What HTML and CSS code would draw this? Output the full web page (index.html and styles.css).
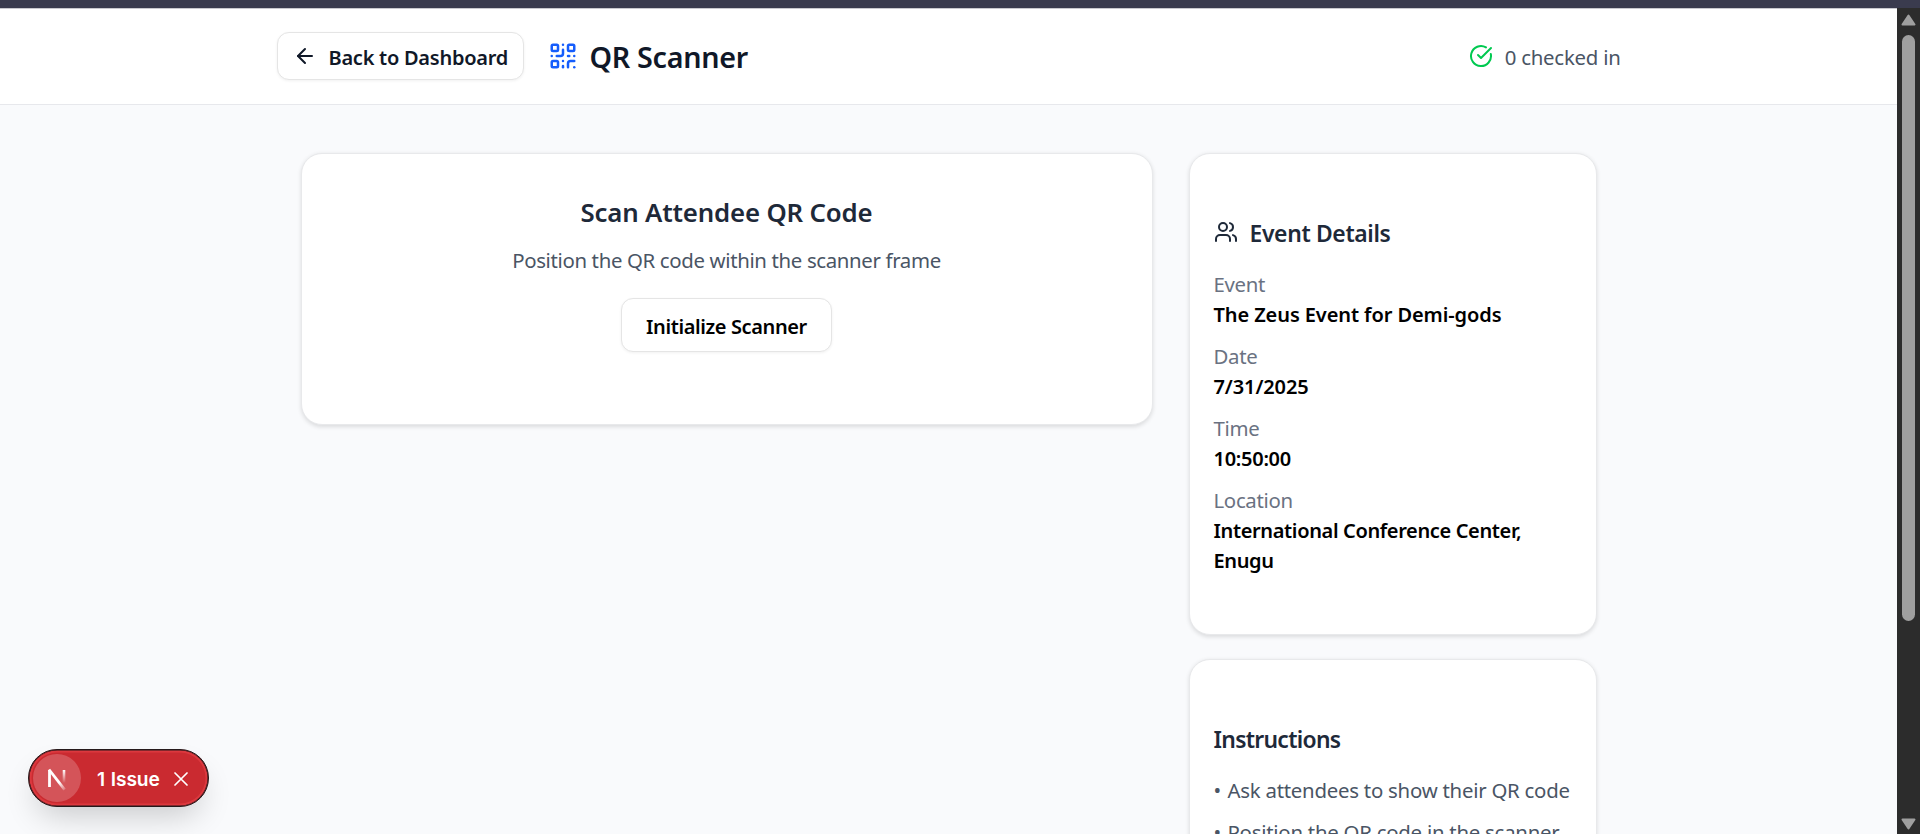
FILE: index.html
```html
<!DOCTYPE html>
<html lang="en">
<head>
<meta charset="utf-8">
<title>QR Scanner</title>
<link rel="stylesheet" href="styles.css">
</head>
<body>
<div class="browser-edge"></div>
<div class="viewport">
  <div class="page">
    <header class="header">
      <div class="header-inner">
        <button class="button back">
          <svg class="icon" viewBox="0 0 24 24"><path d="m12 19-7-7 7-7"/><path d="M19 12H5"/></svg>
          <span class="t-back">Back to Dashboard</span>
        </button>
        <div class="brand">
          <svg class="icon icon-qr" viewBox="0 0 24 24"><rect width="5" height="5" x="3" y="3" rx="1"/><rect width="5" height="5" x="16" y="3" rx="1"/><rect width="5" height="5" x="3" y="16" rx="1"/><path d="M21 16h-3a2 2 0 0 0-2 2v3"/><path d="M21 21v.01"/><path d="M12 7v3a2 2 0 0 1-2 2H7"/><path d="M3 12h.01"/><path d="M12 3h.01"/><path d="M12 16v.01"/><path d="M16 12h1"/><path d="M21 12v.01"/><path d="M12 21v-1"/></svg>
          <h1 class="brand-title">QR Scanner</h1>
        </div>
        <div class="checked">
          <svg class="icon icon-check" viewBox="0 0 24 24"><path d="M21.801 10A10 10 0 1 1 17 3.335"/><path d="m9 11 3 3L22 4"/></svg>
          <span>0 checked in</span>
        </div>
      </div>
    </header>
    <main class="main">
      <section class="card scan">
        <h2 class="scan-title">Scan Attendee QR Code</h2>
        <p class="scan-text">Position the QR code within the scanner frame</p>
        <button class="button init">Initialize Scanner</button>
      </section>
      <aside class="side">
        <section class="card panel">
          <h3 class="panel-title">
            <svg class="icon" viewBox="0 0 24 24"><path d="M16 21v-2a4 4 0 0 0-4-4H6a4 4 0 0 0-4 4v2"/><circle cx="9" cy="7" r="4"/><path d="M22 21v-2a4 4 0 0 0-3-3.87"/><path d="M16 3.13a4 4 0 0 1 0 7.75"/></svg>
            Event Details
          </h3>
          <dl class="details">
            <div><dt>Event</dt><dd class="t-name">The Zeus Event for Demi-gods</dd></div>
            <div><dt>Date</dt><dd class="t-date">7/31/2025</dd></div>
            <div><dt>Time</dt><dd class="t-time">10:50:00</dd></div>
            <div><dt>Location</dt><dd class="t-place">International Conference Center, Enugu</dd></div>
          </dl>
        </section>
        <section class="card panel">
          <h3 class="panel-title t-instructions">Instructions</h3>
          <ul class="steps">
            <li><span class="bullet">•</span> Ask attendees to show their QR code</li>
            <li><span class="bullet">•</span> Position the QR code in the scanner</li>
          </ul>
        </section>
      </aside>
    </main>
  </div>
  <div class="scrollbar">
    <svg class="arrow" viewBox="0 0 15 12"><path d="M7.5 1.5 13.5 10.5H1.5Z"/></svg>
    <div class="thumb"></div>
    <svg class="arrow arrow-down" viewBox="0 0 15 12"><path d="M7.5 10.5 13.5 1.5H1.5Z"/></svg>
  </div>
</div>
<div class="issue">
  <span class="issue-logo">
    <svg viewBox="0 0 48 48">
      <defs>
        <linearGradient id="diag" gradientUnits="userSpaceOnUse" x1="27" y1="28" x2="34" y2="37"><stop stop-color="#fff"/><stop offset="1" stop-color="#fff" stop-opacity="0"/></linearGradient>
        <linearGradient id="stem" gradientUnits="userSpaceOnUse" x1="0" y1="16" x2="0" y2="29"><stop stop-color="#fff"/><stop offset="1" stop-color="#fff" stop-opacity="0"/></linearGradient>
      </defs>
      <path d="M16.5 33V16" stroke="#fff" stroke-width="2.8"/>
      <path d="M16 15.5 31.6 35.6" stroke="url(#diag)" stroke-width="2.8"/>
      <path d="M31 16V30" stroke="url(#stem)" stroke-width="2.6"/>
    </svg>
  </span>
  <span class="issue-text">1 Issue</span>
  <svg class="issue-close" viewBox="0 0 14 14"><path d="M1 1 13 13M13 1 1 13"/></svg>
</div>
</body>
</html>
```
FILE: styles.css
```css
* { box-sizing: border-box; }
body {
  margin: 0;
  height: 834px;
  overflow: hidden;
  display: flex;
  flex-direction: column;
  background: #f9fafb;
  color: #000;
  font: 400 20.4px/30px "Noto Sans", sans-serif;
}
h1, h2, h3, p, dl, dd, ul { margin: 0; padding: 0; }
h1, h2, h3 { font-weight: 600; }
ul { list-style: none; }

.browser-edge { flex: none; height: 8px; background: #3a3b4e; }
.viewport { flex: 1; min-height: 0; display: flex; }
.page { flex: 1; overflow: hidden; background: #f9fafc; }

.icon {
  flex: none;
  width: 24px;
  height: 24px;
  fill: none;
  stroke: currentColor;
  stroke-width: 2;
  stroke-linecap: round;
  stroke-linejoin: round;
}
.button {
  display: flex;
  align-items: center;
  background: #fff;
  border: 1px solid #e5e5e5;
  border-radius: 12px;
  box-shadow: 0 1px 3px rgba(0, 0, 0, .06);
  font: 600 20px/30px "Noto Sans", sans-serif;
  color: #000;
}

.header { height: 97px; background: #fff; border-top: 1px solid #c9c9ce; border-bottom: 1px solid #e7e8ec; }
.header-inner {
  width: 1344px;
  height: 94px;
  margin: 0 auto;
  display: flex;
  align-items: center;
}
.back { width: 247px; height: 48px; padding: 4px 0 0 15px; gap: 12px; color: #101828; }
.back .icon { margin-top: -5px; }
.t-back { letter-spacing: -.26px; white-space: nowrap; }
.brand { display: flex; align-items: center; gap: 12px; margin-left: 24px; color: #101828; }
.icon-qr { width: 30px; height: 30px; color: #155dfc; }
.brand-title { font-size: 28.7px; line-height: 42px; letter-spacing: -.3px; padding-top: 1px; }
.checked { display: flex; align-items: center; gap: 12px; margin-left: auto; color: #4a5565; letter-spacing: -.25px; }
.checked span { padding-top: 1px; }
.icon-check { color: #00c950; }

.main {
  width: 1296px;
  margin: 48px auto 0;
  display: grid;
  grid-template-columns: 852px 408px;
  gap: 36px;
  align-items: start;
}
.card {
  background: #fff;
  border: 1px solid #e8e9eb;
  border-radius: 21px;
  box-shadow: 0 1.5px 4px rgba(0, 0, 0, .12);
}
.scan { height: 272px; padding-top: 37px; display: flex; flex-direction: column; align-items: center; }
.scan-title { font-size: 25.8px; line-height: 42px; letter-spacing: -.17px; color: #1e2939; }
.scan-text { margin-top: 12px; letter-spacing: -.35px; color: #4a5565; }
.init { width: 211px; height: 54px; margin-top: 23px; padding: 4px 0 0; justify-content: center; letter-spacing: -.39px; }

.side { display: flex; flex-direction: column; gap: 24px; }
.panel { padding: 61px 24px 59px; }
.panel-title {
  display: flex;
  align-items: center;
  gap: 12px;
  height: 36px;
  padding-top: 2px;
  font-size: 22.9px;
  line-height: 36px;
  letter-spacing: -.35px;
  color: #1e2939;
}
.panel-title .icon { margin-top: -5px; }
.t-instructions { letter-spacing: -.72px; }
.details { margin-top: 18px; display: flex; flex-direction: column; gap: 12px; }
.details dt { color: #6a7282; letter-spacing: -.32px; }
.details dd { padding-top: 1px; margin-bottom: -1px; font-size: 20px; font-weight: 600; }
.t-name { letter-spacing: -.09px; }
.t-date { letter-spacing: -.1px; }
.t-time { letter-spacing: -.28px; }
.t-place { letter-spacing: -.36px; }
.steps { margin-top: 18px; display: flex; flex-direction: column; gap: 12px; color: #4a5565; letter-spacing: -.25px; white-space: nowrap; }
.bullet { margin-right: 1.5px; }

.scrollbar {
  flex: none;
  width: 23px;
  display: flex;
  flex-direction: column;
  align-items: center;
  padding: 6px 0 4px;
  background: #2c2c2c;
}
.arrow { width: 15px; height: 12px; fill: #9f9f9f; stroke: #9f9f9f; stroke-width: 2; stroke-linejoin: round; }
.thumb { width: 13px; height: 586px; margin-top: 9px; border-radius: 7px; background: #9f9f9f; }
.arrow-down { margin-top: auto; }

.issue {
  position: absolute;
  left: 28px;
  top: 749px;
  width: 181px;
  height: 58px;
  display: flex;
  align-items: center;
  padding-left: 4px;
  border: 1px solid #26191b;
  border-radius: 29px;
  background: #ca2a30;
  box-shadow: inset 0 0 0 .5px #26191b, inset 0 0 0 2.5px #dc383e, 0 16px 32px -8px rgba(0, 0, 0, .2);
  color: #fff;
}
.issue-logo { width: 48px; height: 48px; border-radius: 50%; background: rgba(255, 255, 255, .2); }
.issue-logo svg { display: block; fill: none; }
.issue-text { width: 63px; padding-top: 1px; margin-left: 16px; font: 600 19.2px/30px Inter, sans-serif; letter-spacing: -.1px; word-spacing: 1px; white-space: nowrap; }
.issue-close { width: 14px; height: 14px; margin-left: 13.5px; margin-top: 1px; fill: none; stroke: #fff; stroke-width: 1.7; stroke-linecap: round; }
```
